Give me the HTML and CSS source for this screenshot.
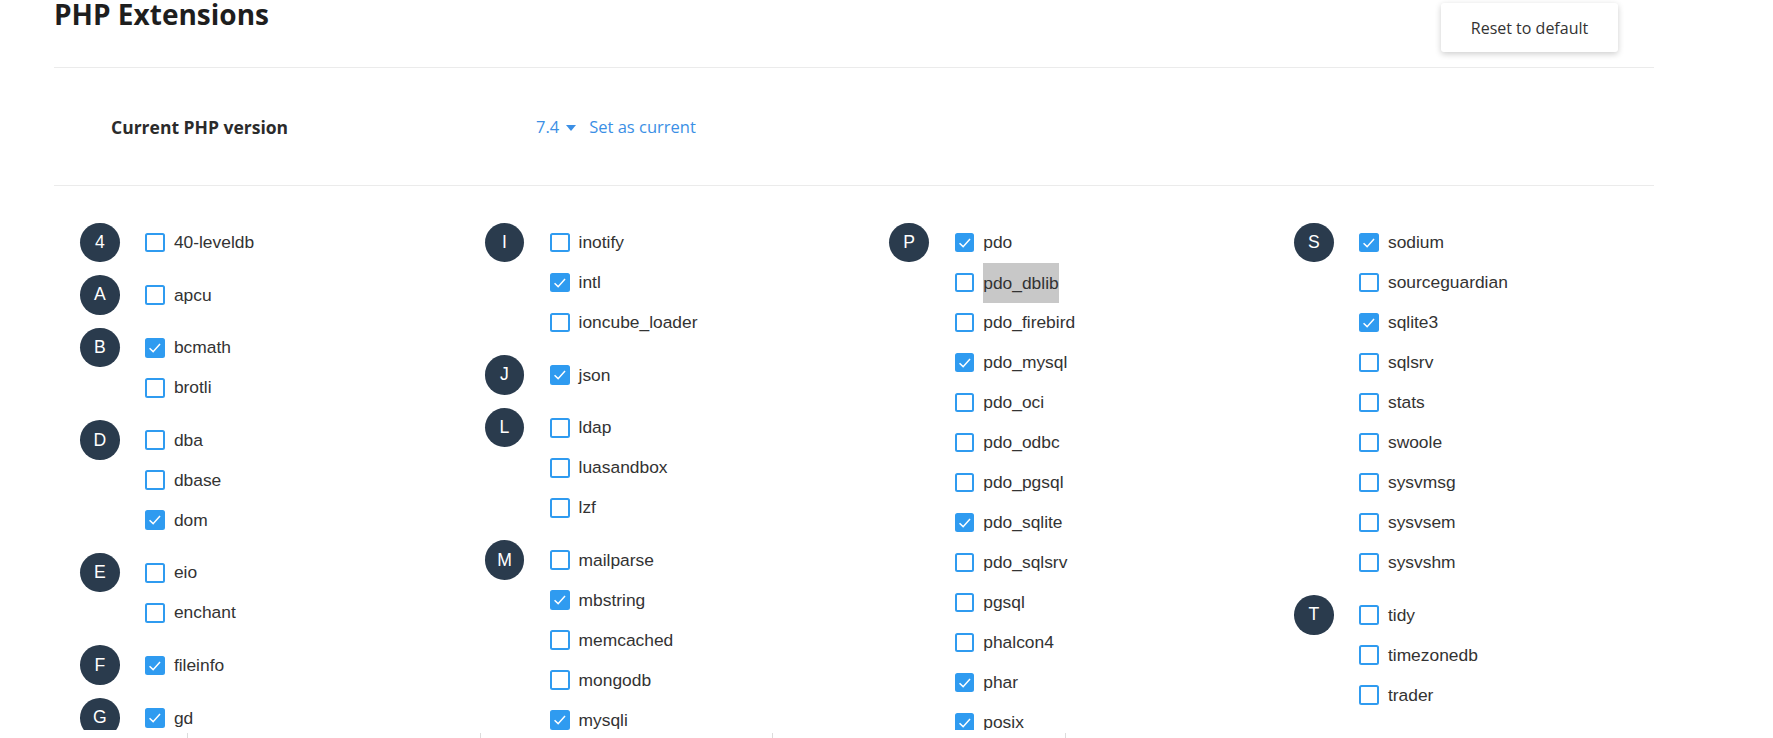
FILE: index.html
```html
<!DOCTYPE html>
<html lang="en">
<head>
    <meta charset="UTF-8">
    <title>PHP Extensions</title>
    <link rel="stylesheet" href="styles.css">
</head>
<body>
<div class="page">

    <div class="top">
        <h1 class="title">PHP Extensions</h1>
        <button class="reset-btn">Reset to default</button>
    </div>

    <div class="version-row">
        <div class="version-label">Current PHP version</div>
        <div class="version-pick">
            <span class="version">7.4</span><span class="caret"></span>
            <a class="set-current">Set as current</a>
        </div>
    </div>

    <div class="ext-area">
        <!-- column 1 -->
        <div class="ext-col">
            <div class="group">
                <div class="letter">4</div>
                <ul class="items">
                    <li class="item"><span class="box"></span>40-leveldb</li>
                </ul>
            </div>
            <div class="group">
                <div class="letter">A</div>
                <ul class="items">
                    <li class="item"><span class="box"></span>apcu</li>
                </ul>
            </div>
            <div class="group">
                <div class="letter">B</div>
                <ul class="items">
                    <li class="item"><span class="box checked"><svg viewBox="0 0 16 16"><path d="M2.6 8.4 L6.2 11.8 L13.2 4"/></svg></span>bcmath</li>
                    <li class="item"><span class="box"></span>brotli</li>
                </ul>
            </div>
            <div class="group">
                <div class="letter">D</div>
                <ul class="items">
                    <li class="item"><span class="box"></span>dba</li>
                    <li class="item"><span class="box"></span>dbase</li>
                    <li class="item"><span class="box checked"><svg viewBox="0 0 16 16"><path d="M2.6 8.4 L6.2 11.8 L13.2 4"/></svg></span>dom</li>
                </ul>
            </div>
            <div class="group">
                <div class="letter">E</div>
                <ul class="items">
                    <li class="item"><span class="box"></span>eio</li>
                    <li class="item"><span class="box"></span>enchant</li>
                </ul>
            </div>
            <div class="group">
                <div class="letter">F</div>
                <ul class="items">
                    <li class="item"><span class="box checked"><svg viewBox="0 0 16 16"><path d="M2.6 8.4 L6.2 11.8 L13.2 4"/></svg></span>fileinfo</li>
                </ul>
            </div>
            <div class="group">
                <div class="letter">G</div>
                <ul class="items">
                    <li class="item"><span class="box checked"><svg viewBox="0 0 16 16"><path d="M2.6 8.4 L6.2 11.8 L13.2 4"/></svg></span>gd</li>
                    <li class="item"><span class="box"></span>gettext</li>
                    <li class="item"><span class="box"></span>gmp</li>
                </ul>
            </div>
        </div>

        <!-- column 2 -->
        <div class="ext-col">
            <div class="group">
                <div class="letter">I</div>
                <ul class="items">
                    <li class="item"><span class="box"></span>inotify</li>
                    <li class="item"><span class="box checked"><svg viewBox="0 0 16 16"><path d="M2.6 8.4 L6.2 11.8 L13.2 4"/></svg></span>intl</li>
                    <li class="item"><span class="box"></span>ioncube_loader</li>
                </ul>
            </div>
            <div class="group">
                <div class="letter">J</div>
                <ul class="items">
                    <li class="item"><span class="box checked"><svg viewBox="0 0 16 16"><path d="M2.6 8.4 L6.2 11.8 L13.2 4"/></svg></span>json</li>
                </ul>
            </div>
            <div class="group">
                <div class="letter">L</div>
                <ul class="items">
                    <li class="item"><span class="box"></span>ldap</li>
                    <li class="item"><span class="box"></span>luasandbox</li>
                    <li class="item"><span class="box"></span>lzf</li>
                </ul>
            </div>
            <div class="group">
                <div class="letter">M</div>
                <ul class="items">
                    <li class="item"><span class="box"></span>mailparse</li>
                    <li class="item"><span class="box checked"><svg viewBox="0 0 16 16"><path d="M2.6 8.4 L6.2 11.8 L13.2 4"/></svg></span>mbstring</li>
                    <li class="item"><span class="box"></span>memcached</li>
                    <li class="item"><span class="box"></span>mongodb</li>
                    <li class="item"><span class="box checked"><svg viewBox="0 0 16 16"><path d="M2.6 8.4 L6.2 11.8 L13.2 4"/></svg></span>mysqli</li>
                </ul>
            </div>
        </div>

        <!-- column 3 -->
        <div class="ext-col">
            <div class="group">
                <div class="letter">P</div>
                <ul class="items">
                    <li class="item"><span class="box checked"><svg viewBox="0 0 16 16"><path d="M2.6 8.4 L6.2 11.8 L13.2 4"/></svg></span>pdo</li>
                    <li class="item"><span class="box"></span><span class="sel">pdo_dblib</span></li>
                    <li class="item"><span class="box"></span>pdo_firebird</li>
                    <li class="item"><span class="box checked"><svg viewBox="0 0 16 16"><path d="M2.6 8.4 L6.2 11.8 L13.2 4"/></svg></span>pdo_mysql</li>
                    <li class="item"><span class="box"></span>pdo_oci</li>
                    <li class="item"><span class="box"></span>pdo_odbc</li>
                    <li class="item"><span class="box"></span>pdo_pgsql</li>
                    <li class="item"><span class="box checked"><svg viewBox="0 0 16 16"><path d="M2.6 8.4 L6.2 11.8 L13.2 4"/></svg></span>pdo_sqlite</li>
                    <li class="item"><span class="box"></span>pdo_sqlsrv</li>
                    <li class="item"><span class="box"></span>pgsql</li>
                    <li class="item"><span class="box"></span>phalcon4</li>
                    <li class="item"><span class="box checked"><svg viewBox="0 0 16 16"><path d="M2.6 8.4 L6.2 11.8 L13.2 4"/></svg></span>phar</li>
                    <li class="item"><span class="box checked"><svg viewBox="0 0 16 16"><path d="M2.6 8.4 L6.2 11.8 L13.2 4"/></svg></span>posix</li>
                </ul>
            </div>
        </div>

        <!-- column 4 -->
        <div class="ext-col">
            <div class="group">
                <div class="letter">S</div>
                <ul class="items">
                    <li class="item"><span class="box checked"><svg viewBox="0 0 16 16"><path d="M2.6 8.4 L6.2 11.8 L13.2 4"/></svg></span>sodium</li>
                    <li class="item"><span class="box"></span>sourceguardian</li>
                    <li class="item"><span class="box checked"><svg viewBox="0 0 16 16"><path d="M2.6 8.4 L6.2 11.8 L13.2 4"/></svg></span>sqlite3</li>
                    <li class="item"><span class="box"></span>sqlsrv</li>
                    <li class="item"><span class="box"></span>stats</li>
                    <li class="item"><span class="box"></span>swoole</li>
                    <li class="item"><span class="box"></span>sysvmsg</li>
                    <li class="item"><span class="box"></span>sysvsem</li>
                    <li class="item"><span class="box"></span>sysvshm</li>
                </ul>
            </div>
            <div class="group">
                <div class="letter">T</div>
                <ul class="items">
                    <li class="item"><span class="box"></span>tidy</li>
                    <li class="item"><span class="box"></span>timezonedb</li>
                    <li class="item"><span class="box"></span>trader</li>
                </ul>
            </div>
        </div>
    </div>

    <div class="ticks"><span></span><span></span><span></span><span></span></div>

</div>
</body>
</html>
```

FILE: styles.css
```css
body {
    margin: 0;
    font-family: "Liberation Sans", Arial, sans-serif;
    color: #333;
    background-color: white;
}
.page {
    width: 1600px;
    margin-left: 54px;
}
.top {
    display: flex;
    justify-content: space-between;
    align-items: flex-start;
    height: 67px;
    border-bottom: 1px solid #ebebeb;
}
.title {
    margin: 0;
    font-family: "Open Sans", sans-serif;
    font-weight: 700;
    font-size: 28px;
    line-height: 28px;
    color: #1e1e1e;
}
.reset-btn {
    margin-top: 3px;
    margin-right: 36px;
    width: 177px;
    height: 49px;
    background-color: white;
    border: none;
    border-radius: 3px;
    box-shadow: 0 2px 6px rgba(0, 0, 0, 0.2);
    font-family: "Open Sans", sans-serif;
    font-size: 16px;
    color: #333;
    cursor: pointer;
}
.version-row {
    display: flex;
    align-items: center;
    height: 117px;
    padding-left: 57px;
    border-bottom: 1px solid #ebebeb;
}
.version-label {
    width: 425px;
    font-family: "Open Sans", sans-serif;
    font-weight: 700;
    font-size: 17.5px;
    color: #2b2b2b;
}
.version-pick {
    display: flex;
    align-items: center;
    font-family: "Open Sans", sans-serif;
    font-size: 16.5px;
    color: #3b8fe5;
}
.caret {
    width: 0;
    height: 0;
    border-left: 5px solid transparent;
    border-right: 5px solid transparent;
    border-top: 6px solid #3b8fe5;
    margin: 2px 13px 0 7px;
}
.set-current {
    cursor: pointer;
}
.ext-area {
    display: grid;
    grid-template-columns: repeat(4, 404.7px);
    align-items: start;
    height: 544px;
    padding: 36.5px 0 0 26px;
    box-sizing: border-box;
    overflow: hidden;
}
.group {
    display: flex;
    margin-bottom: 12.6px;
}
.letter {
    flex-shrink: 0;
    width: 39.6px;
    height: 39.6px;
    margin-right: 25.7px;
    border-radius: 50%;
    background-color: #2a3b4d;
    color: white;
    display: flex;
    align-items: center;
    justify-content: center;
    font-size: 17.6px;
}
.items {
    list-style: none;
    margin: 0;
    padding: 0;
}
.item {
    display: flex;
    align-items: center;
    height: 40px;
    font-size: 17.4px;
    white-space: nowrap;
}
.box {
    flex-shrink: 0;
    display: flex;
    width: 19.8px;
    height: 19.8px;
    box-sizing: border-box;
    margin-right: 8.8px;
    border: 2px solid #2f9bf0;
    border-radius: 2.5px;
}
.box.checked {
    background-color: #2f9bf0;
}
.box svg {
    width: 100%;
    height: 100%;
}
.box path {
    fill: none;
    stroke: white;
    stroke-width: 1.5;
}
.sel {
    display: inline-block;
    height: 40px;
    line-height: 40px;
    background-color: #c8c8c8;
}
.ticks {
    display: flex;
    height: 5px;
    margin-top: 3px;
    padding-left: 133px;
}
.ticks span {
    width: 291.5px;
    border-left: 1px solid #dcdcdc;
}
```
